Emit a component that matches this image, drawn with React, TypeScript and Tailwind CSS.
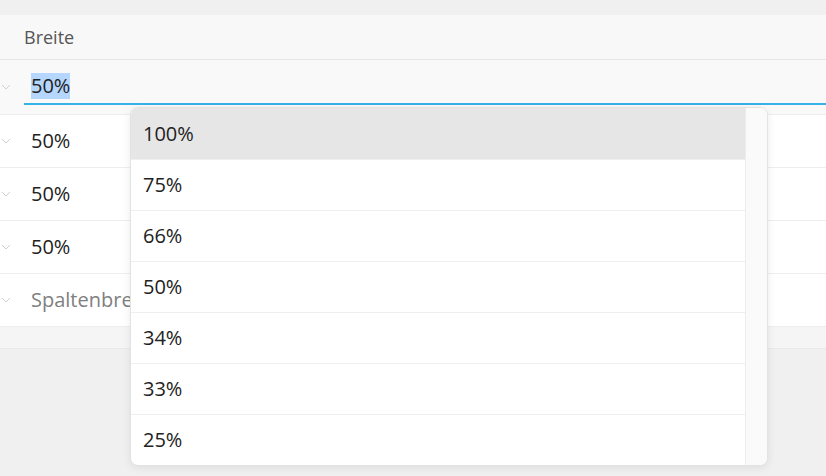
import React from 'react';

const options = ["100%", "75%", "66%", "50%", "34%", "33%", "25%"];

const Chevron = () => (
  <svg width="10" height="6" viewBox="0 0 10 6" className="shrink-0">
    <path d="M1 1l4 4 4-4" fill="none" stroke="#d0d0d0" strokeWidth="1" />
  </svg>
);

const Row = ({ value, placeholder }: { value: string; placeholder?: boolean }) => (
  <div className="flex h-[53px] items-center border-b border-[#ededed] bg-white pl-[1px]">
    <Chevron />
    <span className={`ml-[20px] text-[20px] ${placeholder ? 'text-[#808080]' : 'text-[#222]'}`}>{value}</span>
  </div>
);

const App: React.FC = () => {
  return (
    <div
      className="relative h-[476px] w-[826px] overflow-hidden bg-[#f0f0f0]"
      style={{ fontFamily: '"Open Sans", "Noto Sans", sans-serif' }}
    >
      <div className="h-[15px]" />
      <div className="bg-white">
        <div className="flex h-[45px] items-center border-b border-[#e6e6e6] bg-[#f8f8f8] pl-[24px] text-[18px] text-[#555]">
          Breite
        </div>
        <div className="flex h-[55px] items-start border-b border-[#ededed] bg-[#f9f9f9] pl-[1px]">
          <div className="flex h-[45px] items-center pt-[8px]">
            <Chevron />
          </div>
          <div className="ml-[13px] flex h-[45px] flex-1 items-center border-b-2 border-[#37b2e4] pl-[7px] pt-[8px]">
            <span className="bg-[#b5d6fd] text-[20px] leading-[26px] text-[#222]">50%</span>
          </div>
        </div>
        <Row value="50%" />
        <Row value="50%" />
        <Row value="50%" />
        <Row value="Spaltenbreite" placeholder />
      </div>
      <div className="h-[22px] border-b border-[#e9e9e9] bg-[#f5f5f5]" />

      <div className="absolute left-[130px] top-[107px] flex w-[638px] overflow-hidden rounded-[8px] border border-[#e3e3e3] bg-white shadow-[0_2px_8px_rgba(0,0,0,0.08)]">
        <div className="flex-1">
          {options.map((o, i) => (
            <div
              key={o}
              className={`flex h-[51px] items-center pl-[12px] text-[20px] text-[#222] ${i === 0 ? 'bg-[#e6e6e6]' : 'border-t border-[#efefef]'}`}
            >
              {o}
            </div>
          ))}
        </div>
        <div className="w-[22px] border-l border-[#ececec] bg-[#fafafa]" />
      </div>
    </div>
  );
};

export default App;
